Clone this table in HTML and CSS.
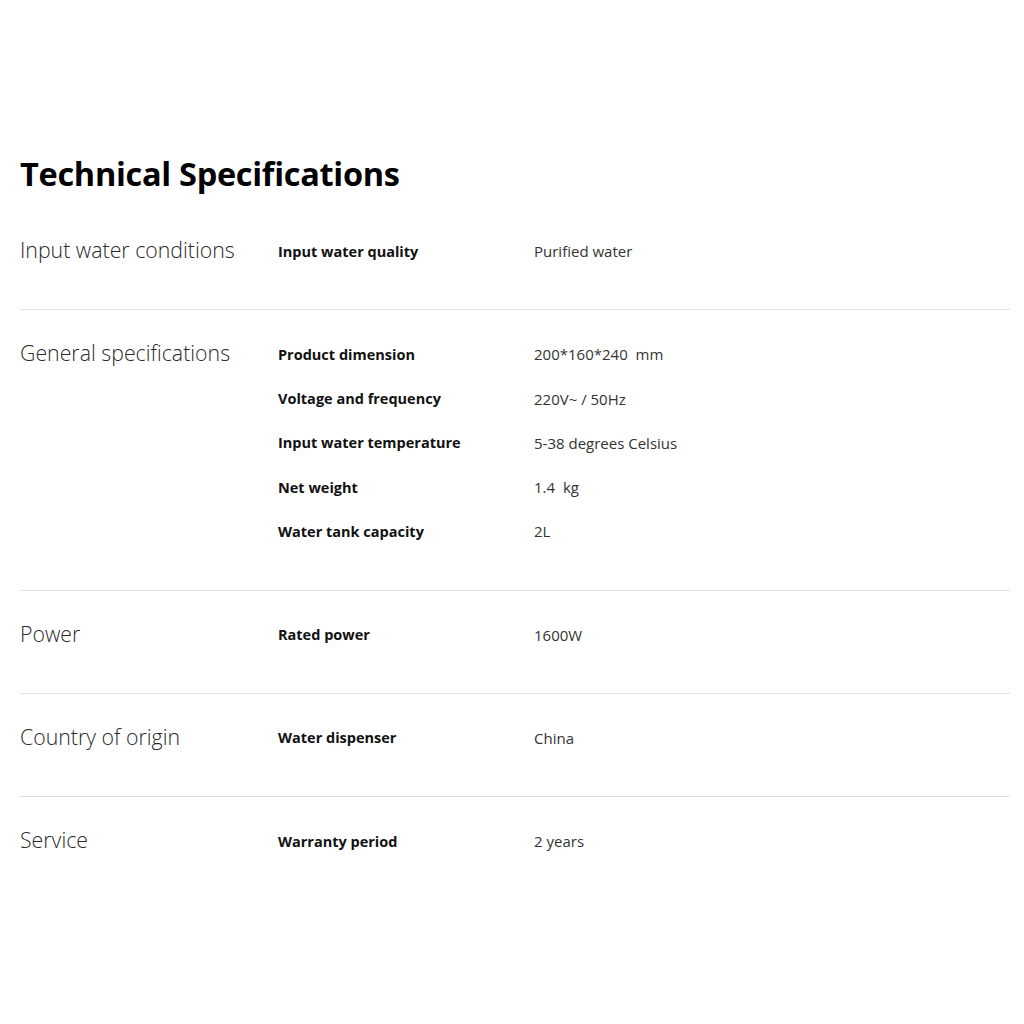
FILE: index.html
```html
<!DOCTYPE html>
<html lang="en">
<head>
<meta charset="utf-8">
<title>Technical Specifications</title>
<link rel="stylesheet" href="styles.css">
</head>
<body>
<main class="specs">
  <h1 class="specs-title">Technical Specifications</h1>
  <section class="spec-group">
    <h2 class="group-name">Input water conditions</h2>
    <dl class="group-items">
      <div class="item"><dt>Input water quality</dt><dd>Purified water</dd></div>
    </dl>
  </section>
  <section class="spec-group">
    <h2 class="group-name">General specifications</h2>
    <dl class="group-items">
      <div class="item"><dt>Product dimension</dt><dd>200*160*240&nbsp; mm</dd></div>
      <div class="item"><dt>Voltage and frequency</dt><dd>220V~ / 50Hz</dd></div>
      <div class="item"><dt>Input water temperature</dt><dd>5-38 degrees Celsius</dd></div>
      <div class="item"><dt>Net weight</dt><dd>1.4&nbsp; kg</dd></div>
      <div class="item"><dt>Water tank capacity</dt><dd>2L</dd></div>
    </dl>
  </section>
  <section class="spec-group">
    <h2 class="group-name">Power</h2>
    <dl class="group-items">
      <div class="item"><dt>Rated power</dt><dd>1600W</dd></div>
    </dl>
  </section>
  <section class="spec-group">
    <h2 class="group-name">Country of origin</h2>
    <dl class="group-items">
      <div class="item"><dt>Water dispenser</dt><dd>China</dd></div>
    </dl>
  </section>
  <section class="spec-group last">
    <h2 class="group-name">Service</h2>
    <dl class="group-items">
      <div class="item"><dt>Warranty period</dt><dd>2 years</dd></div>
    </dl>
  </section>
</main>
</body>
</html>
```
FILE: styles.css
```css
* { box-sizing: border-box; }
html, body { margin: 0; padding: 0; background: #fff; }
body { font-family: "Open Sans", "Noto Sans", sans-serif; color: #222; }

.specs {
  width: 990px;
  margin-left: 20px;
  padding-top: 152px;
}

.specs-title {
  margin: 0 0 11px;
  font-size: 32.5px;
  line-height: 44px;
  font-weight: 700;
  color: #000;
  letter-spacing: -0.3px;
}

.spec-group {
  display: grid;
  grid-template-columns: 258px 1fr;
  padding: 22px 0 36px;
  border-bottom: 1px solid #e2e2e2;
}
.spec-group.last { border-bottom: none; }

.group-name {
  margin: 0;
  font-size: 21.3px;
  font-weight: 300;
  line-height: 42px;
  color: #2a2a2a;
}

.group-items { margin: 0; }

.item {
  display: grid;
  grid-template-columns: 256px 1fr;
  height: 44.25px;
  align-items: center;
}

.item dt {
  font-size: 14.5px;
  font-weight: 700;
  color: #111;
}
.item dd {
  margin: 0;
  font-size: 15px;
  color: #333;
}
```
